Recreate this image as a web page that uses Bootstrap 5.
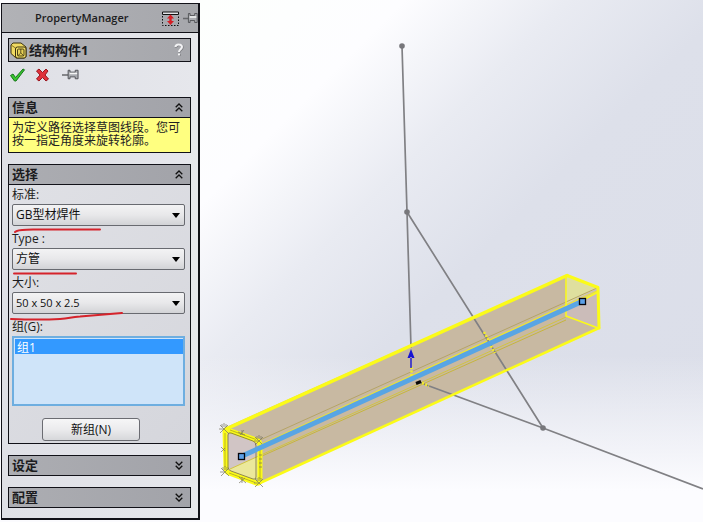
<!DOCTYPE html>
<html lang="zh-CN">
<head>
<meta charset="utf-8">
<meta name="viewport" content="width=device-width, initial-scale=1">
<title>PropertyManager</title>
<link href="https://cdn.jsdelivr.net/npm/bootstrap@5.3.0/dist/css/bootstrap.min.css" rel="stylesheet">
<style>
  body { font: 12px/16px "Open Sans", "Noto Sans CJK SC", sans-serif; color: #1c1c20; background: #fbfbfe; }
  .app-shell { min-height: 100vh; }
  .pm-panel { width: 199px; margin: 3px 0 0 1px; border: 2px solid #111118; border-width: 1px 2px 2px 1px; background: linear-gradient(90deg, #dfe0e6, #e6e7ec); align-self: flex-start; padding-bottom: 10px; }
  .pm-title { height: 29px; background: linear-gradient(90deg, #b1b2b6, #a6a7ac); border-bottom: 1px solid #111118; padding-left: 33px; }
  .pm-title h1 { font-size: 11px; line-height: 16px; font-weight: 600; color: #1c1c20; }
  .pm-body { padding: 5px 7px 0 6px; }
  .feature-bar { height: 24px; border: 1px solid #111118; background: linear-gradient(90deg, #b1b2b6, #a6a7ac); padding: 0 6px 0 1px; }
  .feature-bar h2 { padding-left: 2px; }
  .feature-bar h2, .group-head { font-size: 13px; line-height: 16px; font-weight: 700; }
  .tool { padding: 0; border: 0; background: none; line-height: 0; }
  .tool-row { height: 35px; padding: 5px 0 0 1px; }
  .group-box { border: 1px solid #111118; background: linear-gradient(135deg, #e0e1e6, #d5d6dc); }
  .group-box + .group-box { margin-top: 11px; }
  .group-head { width: 100%; height: 19px; border: 0; color: #1c1c20; background: linear-gradient(90deg, #acadb2, #a2a3a9); padding: 0 7px 2px 3px; }
  .group-head.collapsed .chev { transform: rotate(180deg); }
  .group-head .chev { margin-top: 2px; }
  .group-body { border-top: 1px solid #111118; padding: 0 5px 0 3px; }
  .info-text { background: #ffff80; height: 35px; line-height: 13px; padding: 3px 3px 0; color: #222; }
  .form-rows { display: flex; flex-direction: column; gap: 5px; padding-top: 2px; padding-bottom: 2px; }
  .pm-label { display: block; line-height: 16px; height: 17px; }
  .combo { height: 22px; padding: 0 20px 0 3px; font-size: 12px; line-height: 18px; color: #111; border: 1px solid #686a70; border-radius: 2px;
    background: url("data:image/svg+xml,%3Csvg xmlns='http://www.w3.org/2000/svg' width='8' height='5'%3E%3Cpath d='M0 0h8L4 5z' fill='%23000'/%3E%3C/svg%3E") no-repeat right 4px center / 8px 5px, linear-gradient(#f3f3f4, #e8e8ea 50%, #d2d3d6); }
  .combo-latin { font-size: 11px; }
  .stroke-note { position: absolute; left: -2px; top: 100%; overflow: visible; pointer-events: none; }
  .group-list { height: 70px; padding: 1px; border: 2px solid #6eaee0; border-radius: 0; background: #cfe4f9; font-size: 12px; scrollbar-width: none; }
  .group-list::-webkit-scrollbar { display: none; }
  .group-list option { padding: 0 2px; width: 168px; height: 15px; min-height: 15px; line-height: 13px; display: flex; align-items: center; }
  .group-list option:checked { color: #fff; background: #3399ff linear-gradient(#3399ff, #3399ff); }
  .btn-plain { width: 98px; height: 23px; margin: 7px 0 0 30px; padding: 0; font-size: 12px; line-height: 18px; color: #111; border: 1px solid #6b6c72; border-radius: 3px; background: linear-gradient(#f6f6f7, #ebebed 50%, #d6d7da); }
  .stage { background: linear-gradient(180deg, rgba(252,252,255,0) 68%, #fcfcff 94%), linear-gradient(135deg, #fdfffd 0%, #fdfdff 20%, #e9ebf2 36%, #dde0ea 52%, #dbdee9 100%); }
  .stage svg { width: 100%; }
</style>
<script src="https://cdn.jsdelivr.net/npm/bootstrap@5.3.0/dist/js/bootstrap.bundle.min.js"></script>
</head>
<body>
<svg class="d-none" aria-hidden="true">
  <symbol id="chevrons" viewBox="0 0 8 9"><path d="M.7 4.2 4 1l3.300 3.200M.7 8.200 4 5l3.300 3.200" fill="none" stroke="#111" stroke-width="1.300"/></symbol>
  <symbol id="pin" viewBox="0 0 18 12">
    <path d="M0 6.500h7" stroke="#66676b" stroke-width="1.500"/><path d="M6.500 1.500h2v2h5.500v-2h3v9h-3v-2H8.500v2h-2z" fill="#a9abb0" stroke="#515257"/><path d="M8 5h8" stroke="#f5f5f5" stroke-width="1.500"/>
  </symbol>
</svg>
<div class="app-shell d-flex">
  <aside class="pm-panel flex-shrink-0">
    <header class="pm-title d-flex align-items-center justify-content-between">
      <h1 class="m-0">PropertyManager</h1>
      <div class="d-flex align-items-center">
        <button class="tool" type="button" aria-label="Expand"><svg width="17" height="15" viewBox="0 0 17 15"><path d="M.5 3.500V1h16v2.500z" fill="#e4e5e8" stroke="#111"/><path d="M.5 5v9.500h16V5" fill="none" stroke="#111" stroke-dasharray="1.500 1.500"/><path d="M8.500 3.500 5 7.500H7.300v2.500H5l3.500 4 3.500-4H9.700V7.500H12z" fill="#d51d24"/></svg></button>
        <button class="tool ms-1" type="button" aria-label="Pin panel"><svg width="15" height="12"  viewBox="0 0 18 12" preserveAspectRatio="none"><use href="#pin" width="18" height="12"/></svg></button>
      </div>
    </header>
    <div class="pm-body">
      <div class="feature-bar d-flex align-items-center">
        <svg width="17" height="17" viewBox="0 0 17 17"><path d="M1 3 3 1h8l5 4v9.500l-1.500 1.500H6L1 11.500z" fill="#f0da62" stroke="#3b3210"/><path d="M1 3 5.500 6v9.500" fill="none" stroke="#8b7723"/><rect x="5.500" y="5" width="10.500" height="11" rx="2" fill="#f8e468" stroke="#3b3210"/><rect x="7.500" y="7" width="6.500" height="7" rx="1" fill="#e8d257" stroke="#3b3210" stroke-width=".9"/><path d="M10.800 7v4l-3 2.800M10.800 11l3 2.800" fill="none" stroke="#3b3210" stroke-width=".8"/></svg>
        <h2 class="m-0 flex-grow-1">结构构件1</h2>
        <button class="tool" type="button" aria-label="Help"><svg width="10" height="14" viewBox="0 0 10 14"><path d="M2 4.500C2 1 8.500 1 8.500 4.500 8.500 6.500 5.500 7 5.500 9.500M5.500 11v2" fill="none" stroke="#77787c" stroke-width="2.200"/><path d="M1.500 4C1.500 .5 8 .5 8 4 8 6 5 6.500 5 9M5 10.500v2" fill="none" stroke="#f2f2f4" stroke-width="2"/></svg></button>
      </div>
      <div class="tool-row d-flex align-items-start">
        <button class="tool" type="button" aria-label="OK"><svg width="17" height="16" viewBox="0 0 17 16"><path d="M1.500 8.500 4 7l2.500 3.500L14 2l1.500.8L7 14H5.500z" fill="#39c52e" stroke="#16761a"/></svg></button>
        <button class="tool ms-2" type="button" aria-label="Cancel"><svg width="16" height="16" viewBox="0 0 16 16"><path d="M2.500 4 5 2l3.500 3.500L12 2l2 2-3 4 3.500 4-2.500 2-3.500-3.500L5 14l-2.500-2L6 8z" fill="#e0323b" stroke="#9a161f"/></svg></button>
        <button class="tool ms-2 ps-1" type="button" aria-label="Keep visible"><svg width="17" height="15" viewBox="0 0 18 12"><use href="#pin" width="18" height="12"/></svg></button>
      </div>
      <section class="group-box">
        <button class="group-head d-flex align-items-center justify-content-between" type="button" data-bs-toggle="collapse" data-bs-target="#info" aria-expanded="true">信息<svg class="chev" width="8" height="9"><use href="#chevrons"/></svg></button>
        <div id="info" class="collapse show"><p class="group-body info-text m-0">为定义路径选择草图线段。您可按一指定角度来旋转轮廓。</p></div>
      </section>
      <section class="group-box">
        <button class="group-head d-flex align-items-center justify-content-between" type="button" data-bs-toggle="collapse" data-bs-target="#selection" aria-expanded="true">选择<svg class="chev" width="8" height="9"><use href="#chevrons"/></svg></button>
        <div id="selection" class="collapse show">
          <div class="group-body form-rows">
            <div>
              <label class="pm-label" for="standard">标准:</label>
              <div class="position-relative"><select id="standard" class="form-select combo"><option>GB型材焊件</option></select>
                <svg class="stroke-note" width="112" height="8" aria-hidden="true"><path d="M5 6C8 3 14 4 23 3.500L90 3.500" fill="none" stroke="#d5232b" stroke-width="2" stroke-linecap="round"/></svg></div>
            </div>
            <div>
              <label class="pm-label" for="type">Type :</label>
              <div class="position-relative"><select id="type" class="form-select combo"><option>方管</option></select>
                <svg class="stroke-note" width="112" height="8" aria-hidden="true"><path d="M4 3.500H66" fill="none" stroke="#d5232b" stroke-width="2" stroke-linecap="round"/></svg></div>
            </div>
            <div>
              <label class="pm-label" for="size">大小:</label>
              <div class="position-relative"><select id="size" class="form-select combo combo-latin"><option>50 x 50 x 2.5</option></select>
                <svg class="stroke-note" width="112" height="8" aria-hidden="true"><path d="M1 5C15 5.500 40 5.500 50 5 60 4.500 60 3 70 2.500L112-1" fill="none" stroke="#d5232b" stroke-width="2" stroke-linecap="round"/></svg></div>
            </div>
            <div>
              <label class="pm-label" for="groups">组(G):</label>
              <select id="groups" class="form-select group-list" size="4"><option selected>组1</option></select>
            </div>
            <button class="btn btn-plain" type="button">新组(N)</button>
          </div>
        </div>
      </section>
      <section class="group-box"><button class="group-head collapsed d-flex align-items-center justify-content-between" type="button" aria-expanded="false">设定<svg class="chev" width="8" height="9"><use href="#chevrons"/></svg></button></section>
      <section class="group-box"><button class="group-head collapsed d-flex align-items-center justify-content-between" type="button" aria-expanded="false">配置<svg class="chev" width="8" height="9"><use href="#chevrons"/></svg></button></section>
    </div>
  </aside>
  <main class="stage flex-grow-1 overflow-hidden">
    <svg viewBox="200 0 503 522" preserveAspectRatio="xMinYMin meet" role="img" aria-label="方管结构构件预览">
      <!-- tube faces -->
      <path d="M224 428 567 275 598 287 599 328 259 484 226 471z" fill="#c8b9a2"/>
      <path d="M566 277 598 289 598 328 566 316z" fill="#cbbcb9"/>
      <path d="M567 276 598 288 566 304z" fill="#dfdf9e"/>
      <path d="M225 429 259 442 259 483 226 471z" fill="#d1c5c5"/>
      <path d="M228 470 259 456V482z" fill="#ebe89b"/>
      <!-- inner edges -->
      <g fill="none" stroke="#b5a466"><path d="M260 440 597 288M260 446 566 309"/><path d="M262 456 566 320" stroke="#c6b53e"/><path d="M230 469 566 317" stroke="#d2c441"/></g>
      <path d="M262 444 597 291" stroke="#eee72c" stroke-width="1.300"/>
      <!-- sketch lines -->
      <g stroke="#808084" stroke-width="1.700" fill="none"><path d="M402 46 407 212 411 348M407 212 543 428M421 383 543 428 703 489"/></g>
      <g fill="#77777b"><circle cx="402" cy="46" r="2.800"/><circle cx="407" cy="212" r="2.800"/><circle cx="543" cy="428" r="2.800"/></g>
      <g stroke="#f6ee28" stroke-width="2.500" stroke-dasharray="2 1.500" fill="none"><path d="M484 332 489 341M491 346 495 353M411.500 367V376M422 383 429 386"/></g>
      <!-- highlighted outline -->
      <g fill="none" stroke="#fbfb18" stroke-linejoin="round" stroke-linecap="round">
        <path d="M226 429 567 275.500" stroke-width="3.500"/><path d="M567 275.500 598 287.500 599 328" stroke-width="3"/><path d="M599 328 260 483" stroke-width="2.500"/>
        <path d="M566 277V316L598 328M566 309 598 292" stroke-width="1.500"/>
        <path d="M225 431Q225 429 228 430L256 440Q260 441 260 445V480Q260 484 256 483L229 473Q226 472 226 468z" stroke-width="5"/>
      </g>
      <path d="M228 435Q228 432 231 433L253 441Q256 442 256 446V477Q256 480 253 479L231 471Q228 470 228 467z" fill="none" stroke="#77703e" stroke-width=".8"/>
      <path d="M225 433V467M229 473 255 482.500M230 430 256 439.500M260 446V479" fill="none" stroke="#a29a28" stroke-width=".7"/>
      <!-- relation marks -->
      <g stroke="#77745f" stroke-width=".7">
        <path id="spark" d="M220 425 228 433M228 425 220 433M224 423V427M219 429H223M222 424V427M226 424V427"/>
        <use href="#spark" x="1" y="43"/><use href="#spark" x="35" y="54"/><use href="#spark" x="35" y="12"/>
        <path d="M238 432 245 435M240 435 244 430M242 430V435M221 447 225 451M221 452 225 448M239 483 245 478M239 477 246 483M242 477V483M262 459H259M262 463H259M262 467H259M262 455H259"/>
      </g>
      <!-- selected path segment -->
      <path d="M241 456.500 582 301.500" stroke="#58a5e4" stroke-width="5"/>
      <g fill="#5b9fe7" stroke="#05050c" stroke-width="1.300"><rect x="238.500" y="453.500" width="6" height="6"/><rect x="579.500" y="298.500" width="6" height="6"/></g>
      <path d="M411 349 407.500 358H414.500zM410.300 357H411.700V368H410.300z" fill="#1713d3"/>
      <path d="M416 383.500 421 381.500" stroke="#080808" stroke-width="3"/>
    </svg>
  </main>
</div>
</body>
</html>
